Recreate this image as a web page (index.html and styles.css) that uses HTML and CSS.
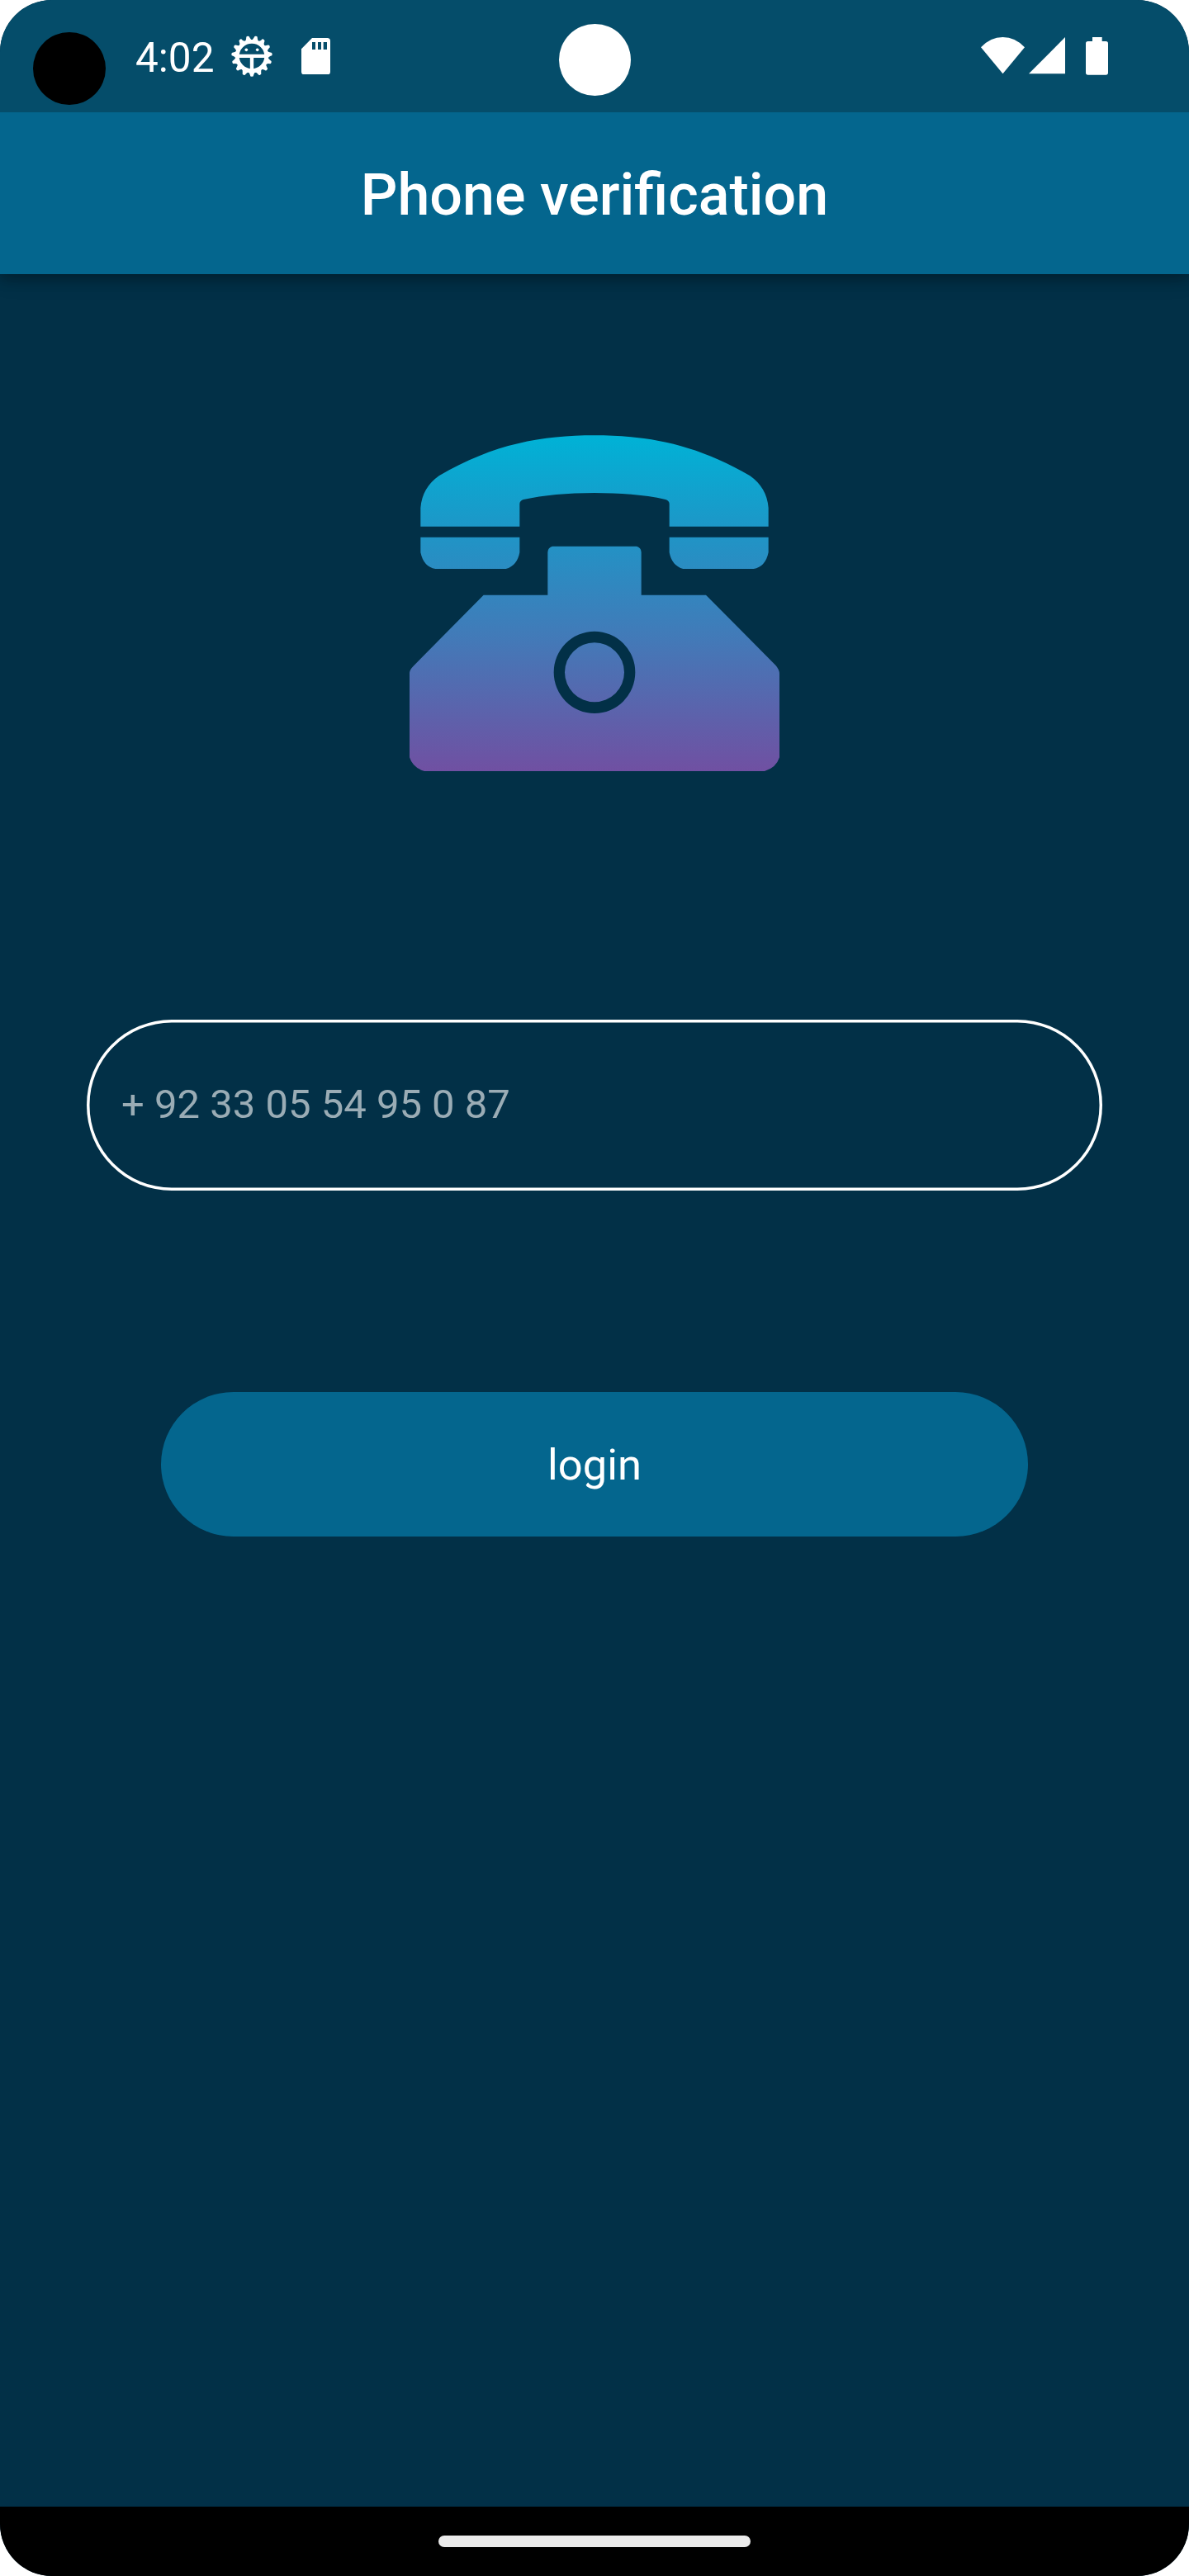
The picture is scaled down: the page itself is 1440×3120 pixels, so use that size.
FILE: index.html
```html
<!DOCTYPE html>
<html lang="en">
<head>
<meta charset="utf-8">
<title>Phone verification</title>
<link rel="stylesheet" href="styles.css">
</head>
<body>
<div class="screen">
  <div class="status-bar">
    <span class="time">4:02</span>
    <svg class="icon-debug" viewBox="-75 -75 150 150" fill="#fff">
      <defs><path id="tooth" d="M-15 57Q-8 60 -6.500 68A6.500 6.500 0 0 0 6.500 68Q8 60 15 57Z"/></defs>
      <circle r="53" fill="none" stroke="#fff" stroke-width="14"/>
      <use href="#tooth"/>
      <use href="#tooth" transform="rotate(24)"/>
      <use href="#tooth" transform="rotate(48)"/>
      <use href="#tooth" transform="rotate(72)"/>
      <use href="#tooth" transform="rotate(96)"/>
      <use href="#tooth" transform="rotate(120)"/>
      <use href="#tooth" transform="rotate(144)"/>
      <use href="#tooth" transform="rotate(168)"/>
      <use href="#tooth" transform="rotate(192)"/>
      <use href="#tooth" transform="rotate(216)"/>
      <use href="#tooth" transform="rotate(240)"/>
      <use href="#tooth" transform="rotate(264)"/>
      <use href="#tooth" transform="rotate(288)"/>
      <use href="#tooth" transform="rotate(312)"/>
      <use href="#tooth" transform="rotate(336)"/>
      <path d="M-50 -7H50V6H6.500V50H-6.500V6H-50Z"/>
      <circle cx="-20" cy="-23" r="5.500"/>
      <circle cx="20" cy="-23" r="5.500"/>
    </svg>
    <svg class="icon-card" viewBox="0 0 105 133">
      <path fill="#fff" fill-rule="evenodd" d="M39 0H94Q105 0 105 11V123Q105 133 95 133H10Q0 133 0 123V40ZM39 15V42H51V15ZM60 15V42H72V15ZM80 15V42H93V15Z"/>
    </svg>
    <div class="signals">
      <svg class="icon-wifi" viewBox="0 0 159 133"><path fill="#fff" d="M0 37Q34 0 79.500 0T159 37L79.500 133Z"/></svg>
      <svg class="icon-cell" viewBox="0 0 132 133"><path fill="#fff" d="M132 0V133H0Z"/></svg>
      <svg class="icon-battery" viewBox="0 0 81 137"><path fill="#fff" d="M24 0H59V15H73Q81 15 81 23V129Q81 137 73 137H8Q0 137 0 129V23Q0 15 8 15H24Z"/></svg>
    </div>
    <span class="cutout cutout-left"></span>
    <span class="cutout cutout-center"></span>
  </div>
  <header class="app-bar"><h1 class="title">Phone verification</h1></header>
  <main class="content">
    <svg class="phone" viewBox="0 0 1500 1380">
      <defs>
        <linearGradient id="fade" gradientUnits="userSpaceOnUse" x1="0" y1="84" x2="0" y2="1302">
          <stop offset="0" stop-color="#00b2d6"/>
          <stop offset=".3" stop-color="#2094c6"/>
          <stop offset=".6" stop-color="#427ab8"/>
          <stop offset="1" stop-color="#7050a2"/>
        </linearGradient>
      </defs>
      <g fill="url(#fade)">
        <path d="M118 413V345Q124 272 185 229C385 112 560 82 750 82C940 82 1115 112 1315 229Q1376 272 1382 345V413H1022V330Q1021 319 1008 315Q900 291 750 291Q600 291 492 315Q479 319 478 330V413Z"/>
        <path d="M118 452H478V507Q469 556 428 567H172Q129 560 118 507Z"/>
        <path d="M1022 452H1382V507Q1371 560 1328 567H1072Q1031 556 1022 507Z"/>
        <path fill-rule="evenodd" d="M580 662V506Q581 489 597 485H903Q919 489 920 506V662H1155L1408 917Q1422 933 1422 948V1252Q1410 1290 1368 1302H132Q90 1290 78 1252V945Q78 934 92 920L347 662ZM898 943A148 149 0 1 0 602 943A148 149 0 1 0 898 943Z"/>
        <circle cx="750" cy="943" r="108"/>
      </g>
    </svg>
    <div class="field"><span class="hint">+ 92 33 05 54 95 0 87</span></div>
    <button class="login">login</button>
  </main>
  <div class="nav-bar"><span class="handle"></span></div>
</div>
</body>
</html>
```
FILE: styles.css
```css
* { box-sizing: border-box; }
body {
  margin: 0;
  background: #fff;
  font-family: Roboto, sans-serif;
  color: #fff;
}
.screen {
  width: 1440px;
  height: 3120px;
  display: flex;
  flex-direction: column;
  overflow: hidden;
  border-radius: 63px;
  background: #023047;
}
svg { display: block; flex: none; }

.status-bar {
  position: relative;
  height: 136px;
  flex: none;
  display: flex;
  align-items: center;
  padding: 0 98px 0 164px;
  background: #054d6a;
}
.time {
  width: 116px;
  padding-top: 3px;
  font-size: 49.5px;
  line-height: 58px;
}
.icon-debug { width: 50px; height: 50px; }
.icon-card { width: 35px; height: 44.33px; margin-left: 35px; }
.signals {
  display: flex;
  align-items: flex-start;
  margin-left: auto;
}
.icon-wifi { width: 53px; height: 44.33px; }
.icon-cell { width: 44px; height: 44.33px; margin-left: 4.67px; }
.icon-battery { width: 27px; height: 45.67px; margin-left: 25px; }
.cutout { position: absolute; border-radius: 50%; }
.cutout-left { left: 40px; top: 39px; width: 88px; height: 88px; background: #000; }
.cutout-center { left: 677px; top: 29px; width: 87px; height: 87px; background: #fff; }

.app-bar {
  height: 196px;
  flex: none;
  display: flex;
  align-items: center;
  justify-content: center;
  padding-top: 4px;
  background: #04668e;
  box-shadow: 0 7px 14px rgba(0, 0, 0, .22), 0 3px 28px rgba(0, 0, 0, .16);
}
.title {
  margin: 0;
  font-size: 70px;
  font-weight: 500;
  line-height: 82px;
}

.content {
  flex: 1;
  display: flex;
  flex-direction: column;
  align-items: center;
  padding-top: 168px;
}
.phone { width: 500px; height: 460px; }
.field {
  width: 1230px;
  height: 206.5px;
  margin-top: 275px;
  padding-left: 42px;
  display: flex;
  align-items: center;
  border-radius: 103px;
  box-shadow: inset 0 0 0 3.5px #fff;
}
.hint { font-size: 49px; line-height: 58px; color: #9aacb5; }
.login {
  width: 1050px;
  height: 175px;
  margin-top: 244.5px;
  padding: 0;
  border: 0;
  border-radius: 87.5px;
  background: #04668e;
  color: #fff;
  font-family: inherit;
  font-size: 52.5px;
  line-height: 62px;
}

.nav-bar {
  height: 84px;
  flex: none;
  display: flex;
  align-items: center;
  justify-content: center;
  background: #000;
}
.handle { width: 378px; height: 14px; border-radius: 7px; background: #ebebeb; }
```
